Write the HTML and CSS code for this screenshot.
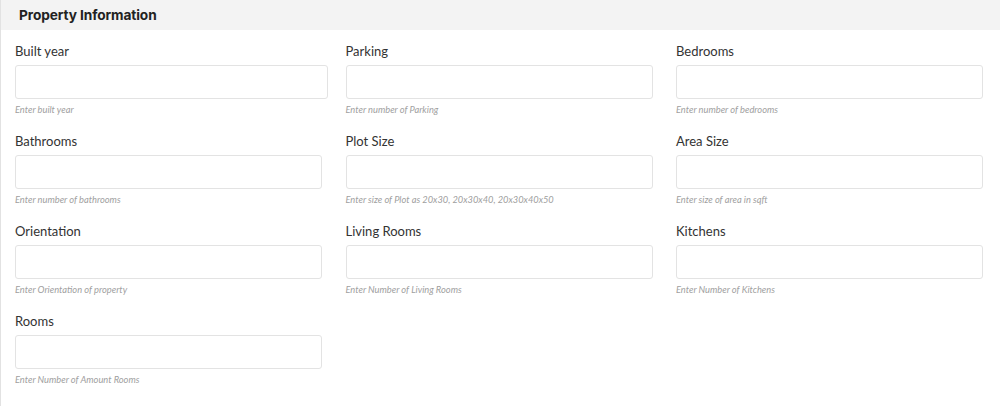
FILE: index.html
```html
<!DOCTYPE html>
<html lang="en">
<head>
<meta charset="utf-8">
<title>Property Information</title>
<link rel="stylesheet" href="styles.css">
</head>
<body>
<section class="panel">
  <h2 class="panel-title">Property Information</h2>
  <div class="panel-body">
    <div class="field">
      <label class="field-label">Built year</label>
      <input class="field-input field-input--wide" type="text">
      <p class="field-help">Enter built year</p>
    </div>
    <div class="field">
      <label class="field-label">Parking</label>
      <input class="field-input" type="text">
      <p class="field-help">Enter number of Parking</p>
    </div>
    <div class="field">
      <label class="field-label">Bedrooms</label>
      <input class="field-input" type="text">
      <p class="field-help">Enter number of bedrooms</p>
    </div>
    <div class="field">
      <label class="field-label">Bathrooms</label>
      <input class="field-input" type="text">
      <p class="field-help">Enter number of bathrooms</p>
    </div>
    <div class="field">
      <label class="field-label">Plot Size</label>
      <input class="field-input" type="text">
      <p class="field-help">Enter size of Plot as 20x30, 20x30x40, 20x30x40x50</p>
    </div>
    <div class="field">
      <label class="field-label">Area Size</label>
      <input class="field-input" type="text">
      <p class="field-help">Enter size of area in sqft</p>
    </div>
    <div class="field">
      <label class="field-label">Orientation</label>
      <input class="field-input" type="text">
      <p class="field-help">Enter Orientation of property</p>
    </div>
    <div class="field">
      <label class="field-label">Living Rooms</label>
      <input class="field-input" type="text">
      <p class="field-help">Enter Number of Living Rooms</p>
    </div>
    <div class="field">
      <label class="field-label">Kitchens</label>
      <input class="field-input" type="text">
      <p class="field-help">Enter Number of Kitchens</p>
    </div>
    <div class="field">
      <label class="field-label">Rooms</label>
      <input class="field-input" type="text">
      <p class="field-help">Enter Number of Amount Rooms</p>
    </div>
  </div>
</section>
</body>
</html>
```

FILE: styles.css
```css
* { box-sizing: border-box; }

html, body {
  margin: 0;
  padding: 0;
  background: #ffffff;
}

body {
  font-family: Lato, "Open Sans", sans-serif;
  color: #333333;
}

.panel {
  width: 1000px;
  min-height: 406px;
  border-left: 1px solid #e2e2e2;
}

.panel-title {
  margin: 0;
  height: 30px;
  padding: 0 0 0 18px;
  background: #f3f3f3;
  font-family: Inter, "Open Sans", sans-serif;
  font-weight: 700;
  font-size: 13.7px;
  line-height: 31px;
  color: #222222;
  letter-spacing: -0.1px;
}

.panel-body {
  display: grid;
  grid-template-columns: repeat(3, 1fr);
  column-gap: 23.5px;
  row-gap: 15px;
  padding: 11px 17px 0 14px;
}

.field {
  display: flex;
  flex-direction: column;
}

.field-label {
  display: block;
  font-size: 13px;
  line-height: 20px;
  color: #333333;
  margin-bottom: 4px;
}

.field-input {
  display: block;
  width: 100%;
  height: 34px;
  margin: 0;
  border: 1px solid #e3e3e3;
  border-radius: 3px;
  background: #ffffff;
  font: inherit;
}

.field-input--wide {
  width: calc(100% + 6px);
}

.field-help {
  margin: 5px 0 0;
  font-size: 9.3px;
  line-height: 12px;
  font-style: italic;
  color: #a0a0a0;
}
```
